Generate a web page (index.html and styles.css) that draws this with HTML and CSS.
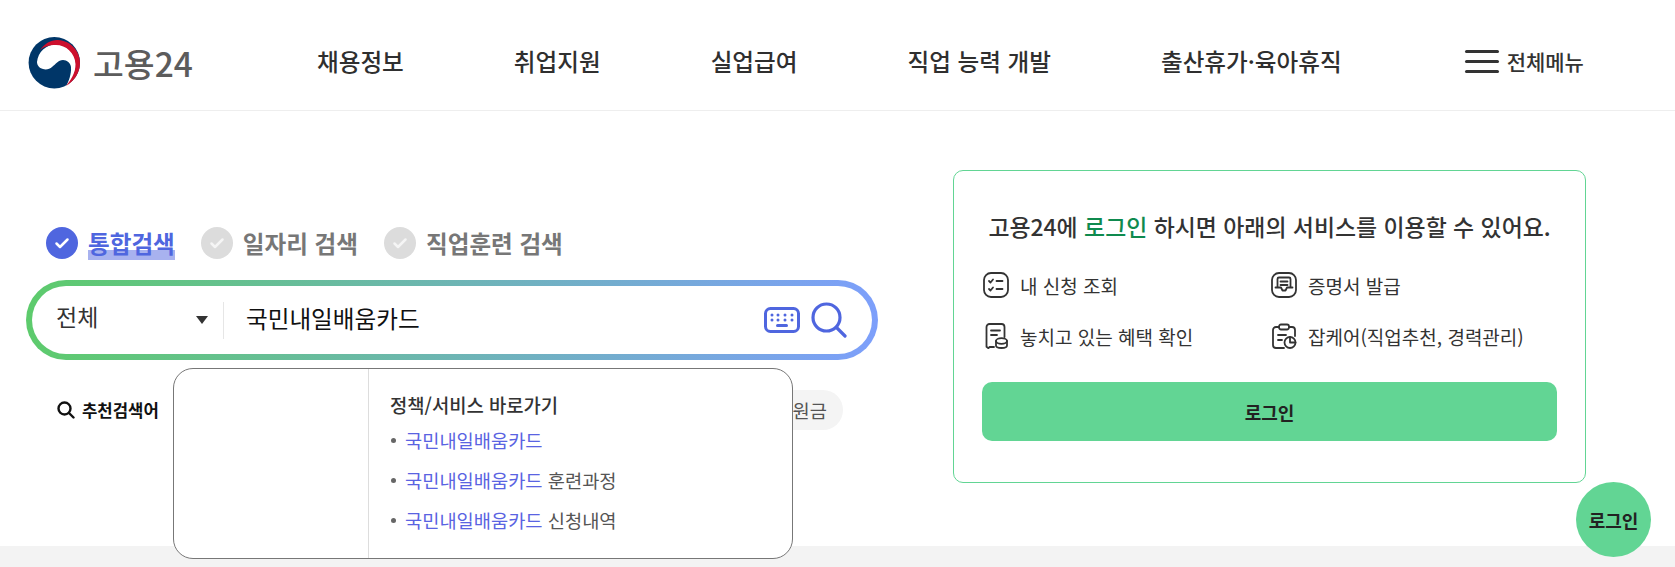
FILE: index.html
```html
<!DOCTYPE html>
<html lang="ko">
<head>
    <meta charset="UTF-8">
    <meta name="viewport" content="width=device-width, initial-scale=1.0">
    <title>고용24</title>
    <link rel="stylesheet" href="styles.css">
</head>
<body>
    <header class="header">
        <a class="logo">
            <svg class="logo-mark" viewBox="0 0 54 52">
                <circle cx="26.300" cy="25.700" r="25.700" fill="#003668"/>
                <path d="M9 25C10 15 18 7.500 28 7.500 39 7.500 48 16 48 27 48 36 44 44 37.500 50.500 41 44 43.500 37 43 30 42.500 26 39 23 35 23 30 23 28 27 24 30 22 32 18 33 15 32 11 31 9 28 9 25Z" fill="#fff"/>
                <path d="M12 13C17 6 24 2.500 30 3 43 4 52 14 52 26 52 36 46 44 38 49 42 44 48 36 47.500 27 47 16 38 8 28 8 21 8 15.500 10 12 13Z" fill="#cd0f2d"/>
            </svg>
            <span class="logo-text">고용24</span>
        </a>
        <nav class="nav">
            <a>채용정보</a>
            <a>취업지원</a>
            <a>실업급여</a>
            <a>직업 능력 개발</a>
            <a>출산휴가·육아휴직</a>
        </nav>
        <a class="all-menu">
            <span class="burger"><i></i><i></i><i></i></span>
            전체메뉴
        </a>
    </header>

    <main class="main">
        <section class="search-area">
            <div class="tabs">
                <label class="tab active"><span class="check"><svg viewBox="0 0 32 32"><path d="M10.500 16.500l3.500 3.500 7.500-7.500"/></svg></span><b>통합검색</b></label>
                <label class="tab"><span class="check"><svg viewBox="0 0 32 32"><path d="M10.500 16.500l3.500 3.500 7.500-7.500"/></svg></span><b>일자리 검색</b></label>
                <label class="tab"><span class="check"><svg viewBox="0 0 32 32"><path d="M10.500 16.500l3.500 3.500 7.500-7.500"/></svg></span><b>직업훈련 검색</b></label>
            </div>

            <div class="search-box">
                <div class="search-inner">
                    <div class="select"><span class="select-label">전체</span><span class="arrow"></span></div>
                    <div class="query">국민내일배움카드</div>
                    <svg class="icon-keyboard" viewBox="0 0 36 26">
                        <rect x="1.500" y="1.500" width="33" height="23" rx="5" fill="none" stroke="#4f66df" stroke-width="3"/>
                        <g fill="#4f66df">
                            <circle cx="8" cy="8" r="1.500"/><circle cx="14" cy="8" r="1.500"/><circle cx="21" cy="8" r="1.500"/><circle cx="28" cy="8" r="1.500"/>
                            <circle cx="8" cy="13" r="1.500"/><circle cx="14" cy="13" r="1.500"/><circle cx="21" cy="13" r="1.500"/><circle cx="28" cy="13" r="1.500"/>
                            <rect x="12" y="17" width="12" height="3" rx="1.500"/>
                        </g>
                    </svg>
                    <svg class="icon-search" viewBox="0 0 36 36" fill="none" stroke="#4f66df" stroke-width="3.200" stroke-linecap="round">
                        <circle cx="15.500" cy="15.500" r="13.500"/>
                        <path d="M25.500 25.500l8.500 8.500"/>
                    </svg>
                </div>
                <div class="suggest">
                    <div class="suggest-left"></div>
                    <div class="suggest-right">
                        <h3>정책/서비스 바로가기</h3>
                        <ul>
                            <li><em>국민내일배움카드</em></li>
                            <li><em>국민내일배움카드</em> 훈련과정</li>
                            <li><em>국민내일배움카드</em> 신청내역</li>
                        </ul>
                    </div>
                </div>
            </div>

            <div class="recommend">
                <span class="recommend-title">
                    <svg viewBox="0 0 18 18" fill="none" stroke="#111" stroke-width="2.400" stroke-linecap="round"><circle cx="7.500" cy="7.500" r="6"/><path d="M12 12l4.500 4.500"/></svg>
                    추천검색어
                </span>
                <span class="chip">지원금</span>
            </div>
        </section>

        <aside class="login-card">
            <p class="login-title">고용24에 <strong>로그인</strong> 하시면 아래의 서비스를 이용할 수 있어요.</p>
            <ul class="services">
                <li>
                    <svg viewBox="0 0 26 26" fill="none" stroke="#333" stroke-width="1.800" stroke-linecap="round" stroke-linejoin="round"><rect x="1" y="1" width="24" height="24" rx="7"/><path d="M6 9l1.500 1.500L10 7.500M13.500 9h6M6 17l1.500 1.500L10 15.500M13.500 17h6"/></svg>
                    내 신청 조회
                </li>
                <li>
                    <svg viewBox="0 0 26 26" fill="none" stroke="#333" stroke-width="1.800" stroke-linecap="round" stroke-linejoin="round"><rect x="1" y="1" width="24" height="24" rx="7"/><path d="M6.500 15V7a1.500 1.500 0 0 1 1.500-1.500h10a1.500 1.500 0 0 1 1.500 1.500v8M9.500 9.500h7M9.500 13h7M4.500 15.500h5.500l1.500 3h3l1.500-3h5.500"/></svg>
                    증명서 발급
                </li>
                <li>
                    <svg viewBox="0 0 26 26" fill="none" stroke="#333" stroke-width="1.800" stroke-linecap="round" stroke-linejoin="round"><path d="M11 24H6.500l-1 1.200-2-1.500V4a3 3 0 0 1 3-3h12a3 3 0 0 1 3 3v10M8 7.500h9M8 12h6"/><ellipse cx="18.500" cy="18" rx="5.500" ry="2.800"/><path d="M13 18v4.500c0 1.500 2.500 2.500 5.500 2.500s5.500-1 5.500-2.500V18"/></svg>
                    놓치고 있는 혜택 확인
                </li>
                <li>
                    <svg viewBox="0 0 26 26" fill="none" stroke="#333" stroke-width="1.800" stroke-linecap="round" stroke-linejoin="round"><path d="M8 4H5a3 3 0 0 0-3 3v15a3 3 0 0 0 3 3h8M18 4h3a3 3 0 0 1 3 3v6"/><rect x="8" y="1.500" width="10" height="5" rx="2"/><path d="M7 12h8M7 17h4"/><circle cx="19" cy="19.500" r="5.500"/><path d="M19 14v5.500h5.500"/></svg>
                    잡케어(직업추천, 경력관리)
                </li>
            </ul>
            <button class="login-btn">로그인</button>
        </aside>
    </main>

    <footer class="footer"></footer>
    <button class="float-login">로그인</button>
</body>
</html>
```

FILE: styles.css
```css
* {
    box-sizing: border-box;
}
body {
    margin: 0;
    height: 567px;
    overflow: hidden;
    display: flex;
    flex-direction: column;
    font-family: "Noto Sans CJK KR", "Noto Sans", sans-serif;
    color: #333;
    background: #fff;
}
ul {
    list-style: none;
    margin: 0;
    padding: 0;
}

/* header */
.header {
    height: 111px;
    flex: none;
    display: flex;
    align-items: center;
    border-bottom: 1px solid #eee;
    padding: 12px 0 0 28px;
}
.logo {
    display: flex;
    align-items: center;
    gap: 11px;
    width: 289px;
    margin-top: 3px;
}
.logo-mark {
    width: 54px;
    height: 52px;
}
.logo-text {
    font-size: 33.500px;
    font-weight: 500;
    color: #5c5c5c;
    line-height: 1;
}
.nav {
    display: flex;
    gap: 110px;
    font-size: 23.600px;
    font-weight: 500;
    color: #2f2f2f;
}
.all-menu {
    margin-left: 123px;
    display: flex;
    align-items: center;
    gap: 8px;
    font-size: 21px;
    font-weight: 500;
}
.burger {
    display: flex;
    flex-direction: column;
    gap: 7px;
    width: 34px;
}
.burger i {
    height: 3px;
    border-radius: 2px;
    background: #333;
}

/* search */
.main {
    flex: 1;
    display: flex;
    gap: 75px;
    padding: 59px 0 0 26px;
}
.search-area {
    width: 852px;
    padding-top: 56px;
}
.tabs {
    display: flex;
    height: 54px;
    padding: 0 0 0 20px;
    gap: 26px;
}
.tab {
    display: flex;
    height: 33px;
    align-items: center;
    gap: 10px;
    font-size: 23.600px;
    color: #777;
}
.tab b {
    font-weight: 700;
}
.check {
    width: 32px;
    height: 32px;
    border-radius: 50%;
    background: #dcdcdc;
}
.check svg {
    display: block;
    fill: none;
    stroke: #f5f5f5;
    stroke-width: 2.500;
    stroke-linecap: round;
    stroke-linejoin: round;
}
.tab.active b {
    color: #4f66df;
    background: linear-gradient(transparent 70%, #a8b2ef 70%);
}
.tab.active .check {
    background: #4f66df;
}
.tab.active .check svg {
    stroke: #fff;
}
.search-box {
    position: relative;
    height: 80px;
    border-radius: 40px;
    padding: 6px;
    background: linear-gradient(90deg, #5dcb6c, #7d9ffb);
}
.search-inner {
    height: 100%;
    display: flex;
    align-items: center;
    background: #fff;
    border-radius: 34px;
    padding: 0 25px 0 25px;
}
.select {
    width: 167px;
    height: 37px;
    display: flex;
    align-items: center;
    justify-content: space-between;
    padding-right: 15px;
    border-right: 1px solid #e6e6e6;
    font-size: 23px;
    color: #333;
}
.select-label {
    margin: -8px 0 0 -1px;
}
.arrow {
    width: 0;
    height: 0;
    border-left: 6px solid transparent;
    border-right: 6px solid transparent;
    border-top: 8px solid #333;
}
.query {
    flex: 1;
    padding: 0 0 4px 22px;
    font-size: 23.600px;
    color: #111;
}
.icon-keyboard {
    width: 36px;
    height: 26px;
    margin-right: 11px;
}
.icon-search {
    width: 36px;
    height: 36px;
}
.suggest {
    position: absolute;
    left: 147px;
    top: 88px;
    width: 620px;
    height: 191px;
    display: flex;
    background: #fff;
    border: 1px solid #777;
    border-radius: 20px;
    z-index: 2;
}
.suggest-left {
    width: 195px;
    border-right: 1px solid #ddd;
}
.suggest-right {
    padding: 21px 0 0 21px;
}
.suggest-right h3 {
    margin: 0;
    font-size: 18.800px;
    font-weight: 500;
    line-height: 30px;
    color: #333;
}
.suggest-right li {
    position: relative;
    padding-left: 15px;
    font-size: 18.700px;
    line-height: 40px;
    color: #555;
}
.suggest-right li::before {
    content: "";
    position: absolute;
    left: 1px;
    top: 18px;
    width: 5px;
    height: 5px;
    border-radius: 50%;
    background: #666;
}
.suggest-right em {
    font-style: normal;
    color: #5a63e2;
}
.recommend {
    margin-top: 30px;
    height: 40px;
    display: flex;
    align-items: center;
    justify-content: space-between;
    padding-left: 31px;
    padding-right: 35px;
}
.recommend-title {
    display: flex;
    align-items: center;
    gap: 7px;
    font-size: 16.700px;
    font-weight: 700;
    color: #111;
}
.recommend-title svg {
    width: 18px;
    height: 18px;
}
.chip {
    height: 40px;
    line-height: 40px;
    padding: 0 16px;
    border-radius: 20px;
    background: #f4f4f4;
    font-size: 18.700px;
    color: #555;
}

/* login card */
.login-card {
    width: 633px;
    height: 313px;
    border: 1px solid #62d594;
    border-radius: 10px;
    padding: 37px 28px 0;
}
.login-title {
    margin: 0;
    text-align: center;
    font-size: 22.900px;
    font-weight: 500;
    line-height: 36px;
    color: #333;
    white-space: nowrap;
}
.login-title strong {
    font-weight: 500;
    color: #0f8a4e;
}
.services {
    margin-top: 28px;
    display: grid;
    grid-template-columns: 288px 1fr;
    row-gap: 25px;
    padding-left: 1px;
}
.services li {
    display: flex;
    align-items: center;
    gap: 11px;
    height: 26px;
    font-size: 19px;
    color: #333;
    white-space: nowrap;
}
.services svg {
    width: 26px;
    height: 26px;
    flex: none;
}
.login-btn {
    display: block;
    width: 100%;
    height: 59px;
    margin-top: 33px;
    border: none;
    border-radius: 10px;
    background: #62d594;
    font: inherit;
    font-size: 18px;
    font-weight: 700;
    color: #222;
}
.footer {
    height: 21px;
    flex: none;
    background: #f3f3f3;
}
.float-login {
    position: fixed;
    left: 1576px;
    top: 482px;
    width: 75px;
    height: 75px;
    border: none;
    border-radius: 50%;
    background: #62d594;
    font: inherit;
    font-size: 18px;
    font-weight: 700;
    color: #222;
    padding: 0;
}
```
